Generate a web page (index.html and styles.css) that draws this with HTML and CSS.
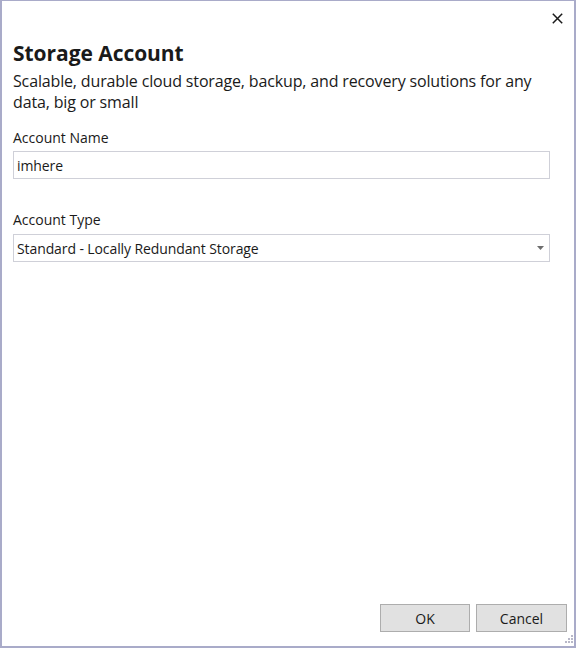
FILE: index.html
```html
<!DOCTYPE html>
<html>
<head>
<meta charset="utf-8">
<link rel="stylesheet" href="styles.css">
</head>
<body>
<div class="dialog">
  <div class="titlebar">
    <button class="close" aria-label="Close">
      <svg width="11" height="11" viewBox="0 0 11 11"><path d="M0.8 0.8 L10.2 10.2 M10.2 0.8 L0.8 10.2" stroke="#1a1a1a" stroke-width="1.5" fill="none"/></svg>
    </button>
  </div>
  <div class="content">
    <h1 class="title">Storage Account</h1>
    <p class="subtitle">Scalable, durable cloud storage, backup, and recovery solutions for any data, big or small</p>
    <label class="label">Account Name</label>
    <div class="field">imhere</div>
    <label class="label label-type">Account Type</label>
    <div class="field select">
      <span>Standard - Locally Redundant Storage</span>
      <svg class="arrow" width="7" height="4" viewBox="0 0 7 4"><path d="M0 0 H7 L3.5 4 Z" fill="#6d6d6d"/></svg>
    </div>
  </div>
  <div class="footer">
    <button class="btn">OK</button>
    <button class="btn btn-cancel">Cancel</button>
  </div>
  <div class="grip">
    <svg width="10" height="10" viewBox="0 0 10 10">
      <g fill="#b8b8c8">
        <rect x="8" y="0" width="2" height="2"/>
        <rect x="5" y="3" width="2" height="2"/><rect x="8" y="3" width="2" height="2"/>
        <rect x="2" y="6" width="2" height="2"/><rect x="5" y="6" width="2" height="2"/><rect x="8" y="6" width="2" height="2"/>
      </g>
    </svg>
  </div>
</div>
</body>
</html>
```
FILE: styles.css
```css
html, body {
  margin: 0;
  padding: 0;
  width: 576px;
  height: 648px;
  overflow: hidden;
  background: #ffffff;
}
.dialog {
  position: relative;
  box-sizing: border-box;
  width: 576px;
  height: 648px;
  border-style: solid;
  border-color: #a9abc9;
  border-width: 1px 2px 2px 2px;
  display: flex;
  flex-direction: column;
  font-family: "Open Sans", "Noto Sans", sans-serif;
  color: #1a1a1a;
}
.titlebar {
  display: flex;
  justify-content: flex-end;
  height: 38px;
  padding: 12px 11px 0 0;
  box-sizing: border-box;
}
.close {
  width: 11px;
  height: 11px;
  padding: 0;
  border: none;
  background: none;
  display: flex;
}
.content {
  flex: 1;
  padding: 0 24px 0 11px;
  display: flex;
  flex-direction: column;
}
.title {
  margin: 0;
  font-size: 21px;
  font-weight: 700;
  line-height: 28px;
  letter-spacing: -0.05px;
}
.subtitle {
  margin: 4px 0 0 0;
  max-width: 524px;
  font-size: 16px;
  line-height: 21px;
  letter-spacing: -0.15px;
}
.label {
  font-size: 14px;
  line-height: 19px;
  margin-top: 15px;
  margin-bottom: 4px;
}
.label-type {
  margin-top: 31px;
  margin-bottom: 5px;
}
.field {
  box-sizing: border-box;
  height: 28px;
  border: 1px solid #cfd0d8;
  padding: 0 3px;
  font-size: 14px;
  letter-spacing: -0.1px;
  display: flex;
  align-items: center;
  justify-content: space-between;
}
.arrow {
  margin-right: 2px;
}
.footer {
  display: flex;
  justify-content: flex-end;
  gap: 6px;
  padding: 0 7px 14px 0;
}
.btn {
  width: 90px;
  height: 28px;
  box-sizing: border-box;
  border: 1px solid #adadad;
  background: #e1e1e1;
  font-family: "Open Sans", "Noto Sans", sans-serif;
  font-size: 14px;
  color: #1a1a1a;
  padding: 0;
}
.btn-cancel {
  width: 91px;
}
.grip {
  position: absolute;
  right: 1px;
  bottom: 1px;
  width: 10px;
  height: 10px;
  display: flex;
}
```
